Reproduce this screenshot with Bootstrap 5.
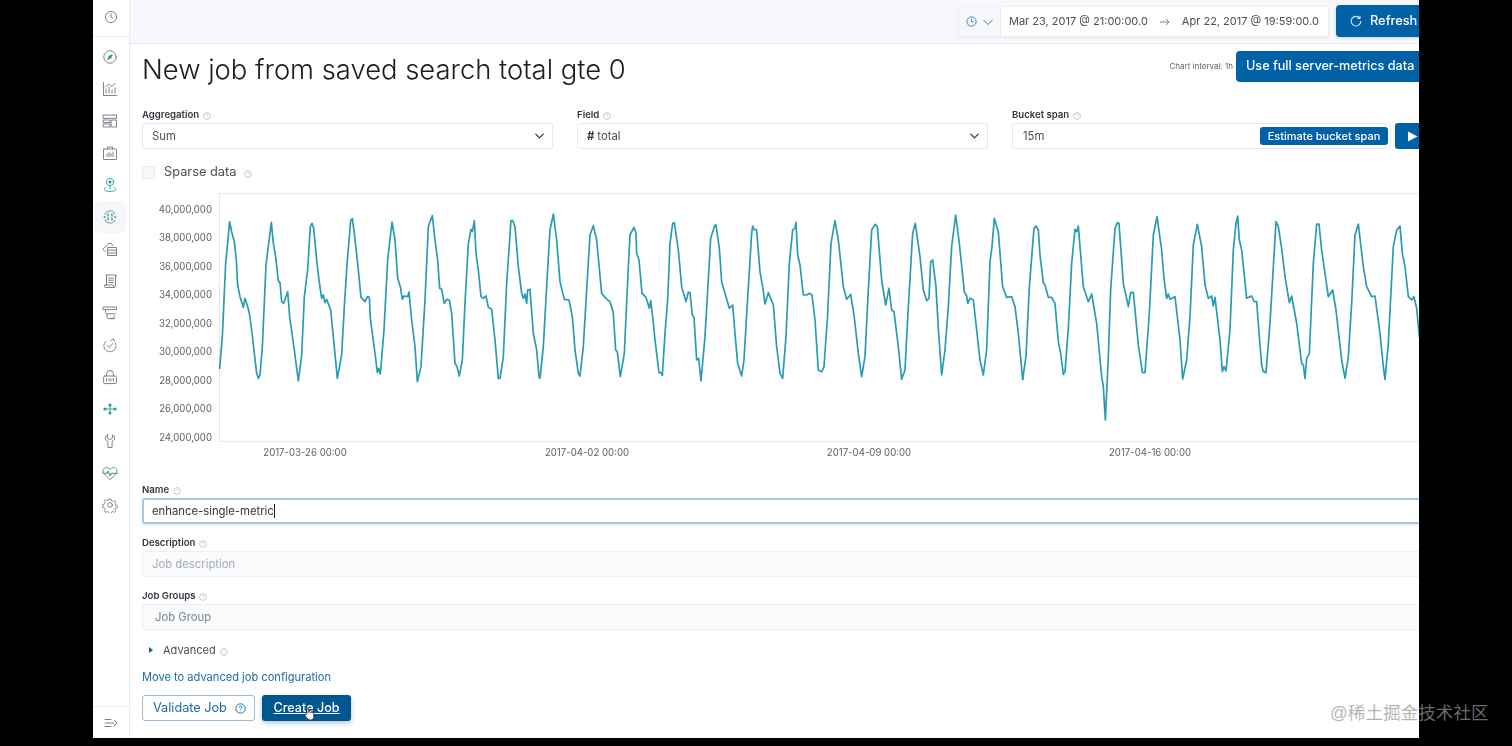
<!DOCTYPE html>
<html lang="en">
<head>
<meta charset="utf-8">
<title>New job</title>
<link href="https://cdn.jsdelivr.net/npm/bootstrap@5.3.0/dist/css/bootstrap.min.css" rel="stylesheet">
<style>
html,body{height:746px;overflow:hidden;background:#000;}
body{font-family:Inter,"Liberation Sans",sans-serif;color:#343741;position:relative;}
.kb-app{margin-left:93px;width:1326px;height:738px;background:#fff;overflow:hidden;filter:blur(.4px);}
.kb-side{flex:0 0 37px;width:37px;height:738px;border-right:1px solid #e9edf2;background:#fff;}
.kb-side svg{width:16px;height:16px;fill:none;stroke:#6f7680;stroke-width:.9;stroke-linecap:round;stroke-linejoin:round;}
.kb-side .tl{stroke:#2a9c92;}
.kb-side .tf{fill:#2a9c92;stroke:none;}
.kb-recent{height:37px;border-bottom:1px solid #e9edf2;padding-bottom:2px;}
.kb-links{padding-top:4px;}
.kb-ic{height:32px;width:32px;margin-left:1px;}
.kb-ic.on{background:#f6f7fa;border-radius:6px;}
.kb-collapse{height:32px;border-top:1px solid #e9edf2;}
.kb-main{flex:0 0 1305px;width:1305px;}
.kb-top{height:44px;background:#f7f8fb;border-bottom:1px solid #e4e8ed;padding-left:828px;padding-top:5px;}
.kb-date{width:371px;background:#fff;border:1px solid #eef1f5;box-shadow:0 1px 2px rgba(80,90,110,.1);font-size:11px;color:#4a4f58;margin-top:1px;height:31px;}
.kb-qs{flex:0 0 42px;width:42px;background:#f5f7fa;border-right:1px solid #e9edf2;}
.kb-range{flex:1;padding:0 0 0 8px;gap:12px;white-space:nowrap;}
.kb-btn{background:#0061a6;color:#fff;border:0;border-radius:4px;font-weight:500;white-space:nowrap;}
.kb-btn:hover{background:#0061a6;color:#fff;}
.kb-refresh{width:94px;height:32px;margin-left:7px;font-size:12.8px;padding:0 0 0 14px;text-align:left;gap:8px;box-shadow:0 1px 3px rgba(0,70,130,.2);}
.kb-body{padding:0 12px;}
.kb-head{height:52px;padding-top:7px;}
.kb-title{font-size:27.4px;font-weight:300;line-height:36px;color:#1a1c21;margin:0;letter-spacing:0;white-space:nowrap;}
.kb-interval{font-size:8px;color:#5e646e;margin-right:3px;margin-top:-1px;}
.kb-full{width:194px;height:31px;font-size:12.65px;padding:0 0 0 10px;text-align:left;margin-right:-7px;flex:none;margin-left:0;}
.kb-lab{font-size:9.6px;font-weight:600;color:#343741;line-height:12px;height:12px;margin:0 0 2px;display:block;white-space:nowrap;}
.kb-help{width:8px;height:8px;margin-left:1px;vertical-align:-1.5px;fill:none;stroke:#c5c9cf;stroke-width:1;}
.kb-ctl{height:26px;font-size:11.3px;padding:0 9px;border:1px solid #e6e9ee;border-radius:3px;color:#4a4f58;background-color:#fff;line-height:24px;box-shadow:none;min-height:0;}
.form-select.kb-ctl{background-size:13px 10px;background-position:right 6px center;padding-right:30px;}
.kb-row{margin-top:13px;--bs-gutter-x:24px;}
.kb-hash{font-weight:700;color:#343741;margin-right:3px;}
.kb-est{height:18px;font-size:11px;padding:0 7px;width:128px;border-radius:3px;line-height:18px;text-align:center;position:absolute;right:2px;top:3px;}
.kb-bucket{width:379px;position:relative;flex:none;padding:0 10px;}
.kb-play{width:32px;height:26px;margin-left:4px;border-radius:3px;padding:0 0 0 2px;flex:none;}
.kb-sparse{height:14px;margin-top:16px;font-size:12.8px;color:#4a4f58;gap:9px;line-height:14px;}
.kb-chk{width:13px;height:13px;background:#f5f7fa;border:1px solid #e9ecf1;border-radius:2px;}
.kb-chart{display:block;width:1281px;height:280px;margin-top:6px;}
.kb-chart text{font-family:Inter,"Liberation Sans",sans-serif;font-size:9.65px;fill:#5a5f69;}
.kb-line{fill:none;stroke:#2a9bb2;stroke-linejoin:round;stroke-linecap:round;}
.kb-form{margin-top:19px;}
.kb-f{margin-bottom:13px;}
.kb-focus{border:2px solid #a9c7e2;border-radius:3px;line-height:22px;padding:0 8px;box-shadow:0 1px 2px rgba(0,90,160,.12);color:#343741;}
.kb-caret{border-right:1px solid #222;padding-right:0;}
.kb-soft{background:#fafbfd;border-color:#eceff3;}
.kb-soft::placeholder{color:#a4a9b1;opacity:1;}
.kb-soft.kb-grp{padding-left:12px;}
.kb-grp::placeholder{color:#7e848d;}
.kb-adv{font-size:11px;margin-top:12px;height:14px;line-height:14px;color:#4a4f58;padding-left:7px;}
.kb-tri{width:0;height:0;border-left:4px solid #0f5f95;border-top:3px solid transparent;border-bottom:3px solid transparent;margin-right:10px;}
.kb-mv{display:block;font-size:11.1px;color:#1a6ca8;text-decoration:none;margin-top:13px;line-height:14px;}
.kb-acts{margin-top:11px;gap:7px;}
.kb-val{width:113px;height:26px;border:1px solid #9dbcd6;border-radius:3px;background:#fff;color:#1a6ca8;font-size:12.7px;padding:0 0 0 10px;text-align:left;line-height:24px;}
.kb-val:hover{background:#fff;color:#1a6ca8;border-color:#9dbcd6;}
.kb-create{width:89px;height:26px;background:#00568f;font-size:12.6px;text-decoration:underline;padding:0;border-radius:3px;box-shadow:0 2px 5px rgba(0,60,110,.3);position:relative;}
.kb-create:hover{background:#00568f;}
.kb-hand{position:absolute;left:42px;top:12px;width:11px;height:14px;}
.kb-mark{position:absolute;left:1330px;top:702px;font-family:"Liberation Sans","Noto Sans CJK SC",sans-serif;font-size:17.6px;line-height:22px;color:rgba(150,150,150,.72);white-space:nowrap;pointer-events:none;}
</style>
</head>
<body>
<svg width="0" height="0" class="position-absolute"><defs>
<symbol id="q" viewBox="0 0 8 8"><circle cx="4" cy="4" r="3.4"/><path d="M3 3.2c0-1.3 2.1-1.3 2.1 0 0 .8-1.1.8-1.1 1.6M4 5.7v.3" stroke-width=".7"/></symbol>
</defs></svg>
<div class="kb-app d-flex">
  <nav class="kb-side d-flex flex-column">
    <div class="kb-recent d-flex align-items-center justify-content-center">
      <svg viewBox="0 0 16 16"><circle cx="8" cy="8" r="5.6"/><path d="M8 4.6V8l2.2 1"/></svg>
    </div>
    <div class="kb-links flex-grow-1">
      <div class="kb-ic d-flex align-items-center justify-content-center"><svg viewBox="0 0 16 16"><circle cx="8" cy="8" r="6.2"/><path class="tf" d="M11 5 9.2 9.2 5 11l1.8-4.2z"/></svg></div>
      <div class="kb-ic d-flex align-items-center justify-content-center"><svg viewBox="0 0 16 16"><path d="M1.5 1.5v13h13"/><path d="M4 12V8M7 12V6M10 12V9M13 12V7"/><path d="M3.5 6 6.5 3l3.2 2.4L13 2.5" stroke-dasharray="1.6 .8"/></svg></div>
      <div class="kb-ic d-flex align-items-center justify-content-center"><svg viewBox="0 0 16 16"><rect x="1.5" y="2" width="13" height="3.4"/><rect x="1.5" y="7" width="6.5" height="2.6"/><rect x="1.5" y="11" width="6.5" height="3"/><rect x="9.5" y="7" width="5" height="7"/></svg></div>
      <div class="kb-ic d-flex align-items-center justify-content-center"><svg viewBox="0 0 16 16"><rect x="1.5" y="4" width="13" height="10.5" rx=".5"/><path d="M5.5 4V2h5v2M5 11.5V9M7 11.5V7.5M9 11.5V8.5M11 11.5V7"/></svg></div>
      <div class="kb-ic d-flex align-items-center justify-content-center"><svg viewBox="0 0 16 16"><circle class="tl" cx="8" cy="5" r="3.6"/><circle class="tf" cx="8" cy="5" r="1.6"/><path class="tl" d="M4 10.5c-2 .8-2.6 2.4-.6 3.2 2.6 1 6.6 1 9.2 0 2-.8 1.4-2.4-.6-3.2M8 9v3"/></svg></div>
      <div class="kb-ic on d-flex align-items-center justify-content-center"><svg viewBox="0 0 16 16"><path d="M3 5.5C3.6 3.2 5.4 1.9 8 1.9s4.4 1.3 5 3.6M3 10.5c.6 2.3 2.4 3.6 5 3.6s4.4-1.3 5-3.6" stroke-dasharray="1.7 1"/><path class="tl" d="M6 5v2M10 5v2M6 9v2M10 9v2M2.2 8h1M12.8 8h1" stroke-width="1.3"/></svg></div>
      <div class="kb-ic d-flex align-items-center justify-content-center"><svg viewBox="0 0 16 16"><path d="M3.5 10.5C1.6 10 1 8.6 1.6 7.2 2.2 6 3.2 5.8 4 6c.4-2.4 2-3.8 4-3.6 1.4.1 2.4 1 3 2.2"/><rect x="6" y="6.5" width="8.5" height="8"/><path d="M6 9.2h8.5M6 12h8.5"/></svg></div>
      <div class="kb-ic d-flex align-items-center justify-content-center"><svg viewBox="0 0 16 16"><path d="M4.5 12V2h9.5v1.6M4.5 2H4M3 12h8.5c0 1 .2 2.2 1 2.5H3.4C2.4 14.5 2 13 3 12zM12.5 14.5c.8-.3 1-1 1-2.5V2.5M6.5 5h5M6.5 7.2h5M6.5 9.4h5"/></svg></div>
      <div class="kb-ic d-flex align-items-center justify-content-center"><svg viewBox="0 0 16 16"><path d="M1.5 2h13v2.6h-13zM3.5 4.6v2.6c0 1 .8 1.6 1.6 1.6h8.4"/><path d="M5 8.8v3.4c0 .9.6 1.4 1.4 1.4h4.2c.8 0 1.4-.5 1.4-1.4V11M8 13.6h4.5"/></svg></div>
      <div class="kb-ic d-flex align-items-center justify-content-center"><svg viewBox="0 0 16 16"><path d="M4 4.2A6 6 0 1 0 13.4 6.4" stroke-dasharray="2 1"/><path class="tl" d="M5.4 8.6 7.4 10.6 10.6 6.6"/><path d="M8.8 3.5 11.4 1.8l1.4 3"/></svg></div>
      <div class="kb-ic d-flex align-items-center justify-content-center"><svg viewBox="0 0 16 16"><rect x="1.6" y="7" width="12.8" height="7.6" rx="1.2"/><path d="M4.6 7V4.8a3.4 3.4 0 0 1 6.8 0V7M4.5 9.5v2.5M8 9.5v2.5M11.5 9.5v2.5M6.2 11h.6M9.4 11h.6"/></svg></div>
      <div class="kb-ic d-flex align-items-center justify-content-center"><svg viewBox="0 0 16 16"><path class="tl" d="M3 8h10M8 4v8"/><circle class="tf" cx="3" cy="8" r="1.6"/><circle class="tf" cx="13" cy="8" r="1.6"/><circle class="tf" cx="8" cy="4" r="1.6"/><circle class="tf" cx="8" cy="12" r="1.6"/></svg></div>
      <div class="kb-ic d-flex align-items-center justify-content-center"><svg viewBox="0 0 16 16"><path d="M5.4 1.8C3.6 2.6 3 4.4 3.5 6c.4 1.2 1.4 2 2.4 2.4V14.5h4.2V8.4c1-.4 2-1.2 2.4-2.4.5-1.6-.1-3.4-1.9-4.2V5L8 6.6 5.4 5z"/></svg></div>
      <div class="kb-ic d-flex align-items-center justify-content-center"><svg viewBox="0 0 16 16"><path d="M8 14.5 2 8.6C.4 7 .7 4.4 2.4 3.2 4.2 2 6.4 2.6 8 4.6c1.6-2 3.8-2.6 5.6-1.4 1.700 1.200 2 3.800.4 5.400z"/><path class="tl" d="M.8 8.200h4l1.200-2 2 4.400 1.400-2.400h5.800" stroke-width="1.100"/></svg></div>
      <div class="kb-ic d-flex align-items-center justify-content-center"><svg viewBox="0 0 16 16"><circle cx="8" cy="8" r="2.300"/><path d="M6.800 1.400h2.400l.4 2 1.500.700 1.800-1 1.600 1.700-1 1.700.600 1.500 2 .500v2.400l-2 .400-.600 1.500 1 1.800-1.600 1.600-1.800-1-1.500.600-.400 2H6.800l-.400-2-1.500-.600-1.800 1-1.600-1.600 1-1.800-.600-1.500-2-.400V7.500l2-.500.600-1.500-1-1.700 1.600-1.700 1.800 1 1.500-.700z" transform="translate(.8 .8) scale(.9)"/></svg></div>
    </div>
    <div class="kb-collapse d-flex align-items-center justify-content-center">
      <svg viewBox="0 0 16 16"><path d="M2 4.500h6M2 8h9M2 11.500h6M11 5l3 3-3 3"/></svg>
    </div>
  </nav>
  <main class="kb-main">
    <div class="kb-top d-flex">
      <div class="kb-date d-flex align-items-center">
        <div class="kb-qs h-100 d-flex align-items-center justify-content-center gap-1">
          <svg width="13" height="13" viewBox="0 0 14 14" fill="none" stroke="#2f7fbd" stroke-width="1"><circle cx="7" cy="7" r="5"/><path d="M7 4v3.200h2.500"/></svg>
          <svg width="12" height="12" viewBox="0 0 12 12" fill="none" stroke="#2f7fbd" stroke-width="1"><path d="M1.500 4 6 8.500 10.500 4"/></svg>
        </div>
        <div class="kb-range d-flex align-items-center">
          <span>Mar 23, 2017 @ 21:00:00.0</span>
          <svg width="10" height="8" viewBox="0 0 10 8" fill="none" stroke="#7b8089" stroke-width="1"><path d="M0 4h9M6 1l3 3-3 3"/></svg>
          <span>Apr 22, 2017 @ 19:59:00.0</span>
        </div>
      </div>
      <button class="btn kb-btn kb-refresh d-flex align-items-center" type="button">
        <svg width="12" height="12" viewBox="0 0 12 12" fill="none" stroke="#cfe2f2" stroke-width="1.100"><path d="M9.800 3.200A4.800 4.800 0 1 0 10.800 6M10 .8v2.700H7.300"/></svg>
        <span>Refresh</span>
      </button>
    </div>
    <div class="kb-body">
      <div class="kb-head d-flex align-items-start">
        <h1 class="kb-title flex-grow-1">New job from saved search total gte 0</h1>
        <div class="d-flex align-items-center">
          <span class="kb-interval">Chart interval: 1h</span>
          <button class="btn kb-btn kb-full" type="button">Use full server-metrics data</button>
        </div>
      </div>
      <div class="row kb-row">
        <div class="col-4">
          <label class="kb-lab">Aggregation <svg class="kb-help"><use href="#q"/></svg></label>
          <select class="form-select kb-ctl"><option>Sum</option></select>
        </div>
        <div class="col-4">
          <label class="kb-lab">Field <svg class="kb-help"><use href="#q"/></svg></label>
          <div class="form-select kb-ctl"><span class="kb-hash">#</span>total</div>
        </div>
        <div class="col-4">
          <label class="kb-lab">Bucket span <svg class="kb-help"><use href="#q"/></svg></label>
          <div class="d-flex">
            <div class="form-control kb-ctl kb-bucket">15m<button class="btn kb-btn kb-est" type="button">Estimate bucket span</button></div>
            <button class="btn kb-btn kb-play d-flex align-items-center justify-content-center" type="button" aria-label="Run"><svg width="11" height="11" viewBox="0 0 11 11"><path fill="#fff" d="M1 .5 10.500 5.500 1 10.500z"/></svg></button>
          </div>
        </div>
      </div>
      <div class="kb-sparse d-flex align-items-center">
        <span class="kb-chk"></span>
        <span>Sparse data <svg class="kb-help ms-1"><use href="#q"/></svg></span>
      </div>
      <svg class="kb-chart" viewBox="142 185 1281 280" role="img" aria-label="Sum of total over time">
        <defs><clipPath id="pl"><rect x="218" y="190" width="1201" height="260"/></clipPath></defs>
        <path d="M219.500 193.500H1419M219.500 193.500V441.500H1419" fill="none" stroke="#e6e8ec"/>
        <g text-anchor="end">
          <text x="212" y="212.500">40,000,000</text><text x="212" y="241">38,000,000</text><text x="212" y="269.500">36,000,000</text><text x="212" y="298">34,000,000</text><text x="212" y="326.500">32,000,000</text><text x="212" y="355">30,000,000</text><text x="212" y="383.500">28,000,000</text><text x="212" y="412">26,000,000</text><text x="212" y="440.500">24,000,000</text>
        </g>
        <g text-anchor="middle">
          <text x="305" y="456">2017-03-26 00:00</text><text x="587" y="456">2017-04-02 00:00</text><text x="869" y="456">2017-04-09 00:00</text><text x="1150" y="456">2017-04-16 00:00</text>
        </g>
        <g clip-path="url(#pl)">
          <polyline class="kb-line" vector-effect="non-scaling-stroke" stroke-width="1.7" transform="translate(215 190) scale(.33333)" points="14,535 22,440 32,220 44,95 50,125 58,155 64,210 68,285 75,320 85,352 90,325 98,350 104,375 110,420 118,490 125,550 130,565 135,555 142,470 153,225 169,97 175,160 182,200 190,272 195,278 200,335 206,340 218,305 224,380 238,480 250,573 260,495 268,320 278,240 286,110 291,100 296,115 305,210 312,270 320,325 325,315 330,338 335,328 347,360 355,440 367,565 380,495 388,350 396,225 407,92 412,86 418,130 430,240 438,322 450,335 457,320 463,322 466,385 480,490 487,547 491,535 496,552 507,420 518,210 531,96 540,150 548,265 556,290 562,328 567,318 578,320 582,306 590,390 600,470 607,575 618,530 630,330 640,110 645,95 652,77 660,150 668,210 674,295 680,298 688,340 695,328 703,330 710,370 720,520 726,530 733,558 742,510 750,340 760,160 768,118 772,125 778,92 783,190 790,240 798,320 805,325 810,320 813,318 820,352 830,358 840,450 850,565 855,565 865,500 875,280 888,92 893,92 900,110 910,230 920,310 925,325 930,312 935,340 938,300 945,298 955,430 965,480 972,560 975,565 985,470 995,290 1005,120 1015,72 1025,150 1035,275 1048,328 1062,330 1072,380 1080,480 1090,550 1095,558 1105,470 1115,300 1125,135 1135,107 1145,150 1160,310 1170,322 1178,330 1185,335 1195,370 1202,480 1207,485 1216,560 1228,490 1240,230 1245,135"/>
          <polyline class="kb-line" vector-effect="non-scaling-stroke" stroke-width="1.7" transform="translate(630 190) scale(.33333)" points="0,135 12,112 18,130 20,190 27,210 36,310 48,322 58,355 62,332 68,380 75,450 87,548 93,548 97,556 105,430 113,330 120,160 128,100 133,98 145,180 155,290 168,335 175,306 180,308 187,375 192,382 200,510 206,505 213,573 225,440 232,320 242,145 255,105 258,105 268,175 275,275 285,310 298,355 308,345 315,430 323,520 335,558 342,510 352,340 365,130 368,108 372,118 380,120 390,245 398,290 405,342 415,308 430,345 440,470 450,550 458,565 468,440 478,220 488,120 495,115 498,97 503,195 510,225 520,315 530,315 538,310 546,315 555,390 565,540 575,545 582,530 592,390 603,160 615,92 625,150 640,290 650,328 662,313 672,375 685,490 695,560 705,500 715,300 725,120 735,103 742,110 755,270 767,345 777,295 785,360 792,365 805,470 815,568 825,540 835,350 848,130 856,100 870,200 880,300 890,332 897,325 902,215 908,210 918,290 925,415 935,555 945,480 955,350 965,170 977,75 988,160 1003,305 1010,318 1013,340 1020,325 1030,330 1040,420 1050,510 1060,555 1070,480 1080,215 1086,170 1093,85 1105,125 1118,290 1130,322 1145,320 1155,350 1165,430 1178,568"/>
          <polyline class="kb-line" vector-effect="non-scaling-stroke" stroke-width="1.7" transform="translate(1020 190) scale(.33333)" points="8,568 18,500 28,290 42,115 48,108 55,120 60,195 70,278 75,285 85,322 95,322 105,340 115,455 122,490 130,553 135,545 145,415 155,220 165,118 170,125 175,108 180,170 190,290 205,335 215,312 230,400 245,560 250,590 256,690 265,500 272,300 285,115 292,98 297,100 310,280 325,350 332,308 340,307 355,465 367,547 375,548 388,370 400,135 411,80 425,180 432,265 440,325 445,312 450,328 465,320 480,450 488,567 500,510 510,380 520,165 532,103 545,170 555,285 565,325 575,318 580,348 585,322 600,450 607,545 612,530 618,543 630,420 640,180 648,100 653,78 658,150 665,180 680,325 695,318 703,335 710,335 718,440 725,525 730,545 738,548 750,400 768,95 775,110 785,175 795,260 808,338 815,318 830,400 845,520 850,525 855,565 860,505 868,490 880,220 890,102 897,102 905,180 925,320 938,300 948,360 965,510 975,565 985,500 995,340 1005,135 1015,102 1030,230 1040,290 1055,320 1065,318 1080,430 1090,530 1095,568 1105,460 1120,170 1130,120 1140,108 1147,190 1155,230 1165,320 1175,330 1182,320 1190,355 1198,440"/>
        </g>
      </svg>
      <div class="kb-form">
        <div class="kb-f">
          <label class="kb-lab">Name <svg class="kb-help"><use href="#q"/></svg></label>
          <div class="form-control kb-ctl kb-focus"><span class="kb-caret">enhance-single-metric</span></div>
        </div>
        <div class="kb-f">
          <label class="kb-lab">Description <svg class="kb-help"><use href="#q"/></svg></label>
          <input class="form-control kb-ctl kb-soft" type="text" placeholder="Job description">
        </div>
        <div class="kb-f">
          <label class="kb-lab">Job Groups <svg class="kb-help"><use href="#q"/></svg></label>
          <input class="form-control kb-ctl kb-soft kb-grp" type="text" placeholder="Job Group">
        </div>
        <div class="kb-adv d-flex align-items-center">
          <span class="kb-tri"></span>
          <span>Advanced <svg class="kb-help"><use href="#q"/></svg></span>
        </div>
        <a class="kb-mv" href="#">Move to advanced job configuration</a>
        <div class="kb-acts d-flex">
          <button class="btn kb-val d-flex align-items-center gap-2" type="button">Validate Job
            <svg width="11" height="11" viewBox="0 0 8 8" fill="none" stroke="#1a6ca8" stroke-width=".7"><use href="#q"/></svg>
          </button>
          <button class="btn kb-btn kb-create" type="button">Create Job
            <svg class="kb-hand" viewBox="0 0 11 14"><path d="M3 7V2c0-1.300 1.800-1.300 1.800 0v3.500c.2-1 1.700-1 1.800 0 .3-.8 1.600-.6 1.700.3.4-.5 1.500-.3 1.500.7v3c0 2-1 3.500-3 3.500H6C4.500 13 3.500 12 2.500 10.500L1 8.500c-.6-1 .8-1.800 1.500-1z" fill="#fff" stroke="#222" stroke-width=".8"/></svg>
          </button>
        </div>
      </div>
    </div>
  </main>
</div>
<div class="kb-mark">@稀土掘金技术社区</div>
<script src="https://cdn.jsdelivr.net/npm/bootstrap@5.3.0/dist/js/bootstrap.bundle.min.js"></script>
</body>
</html>
